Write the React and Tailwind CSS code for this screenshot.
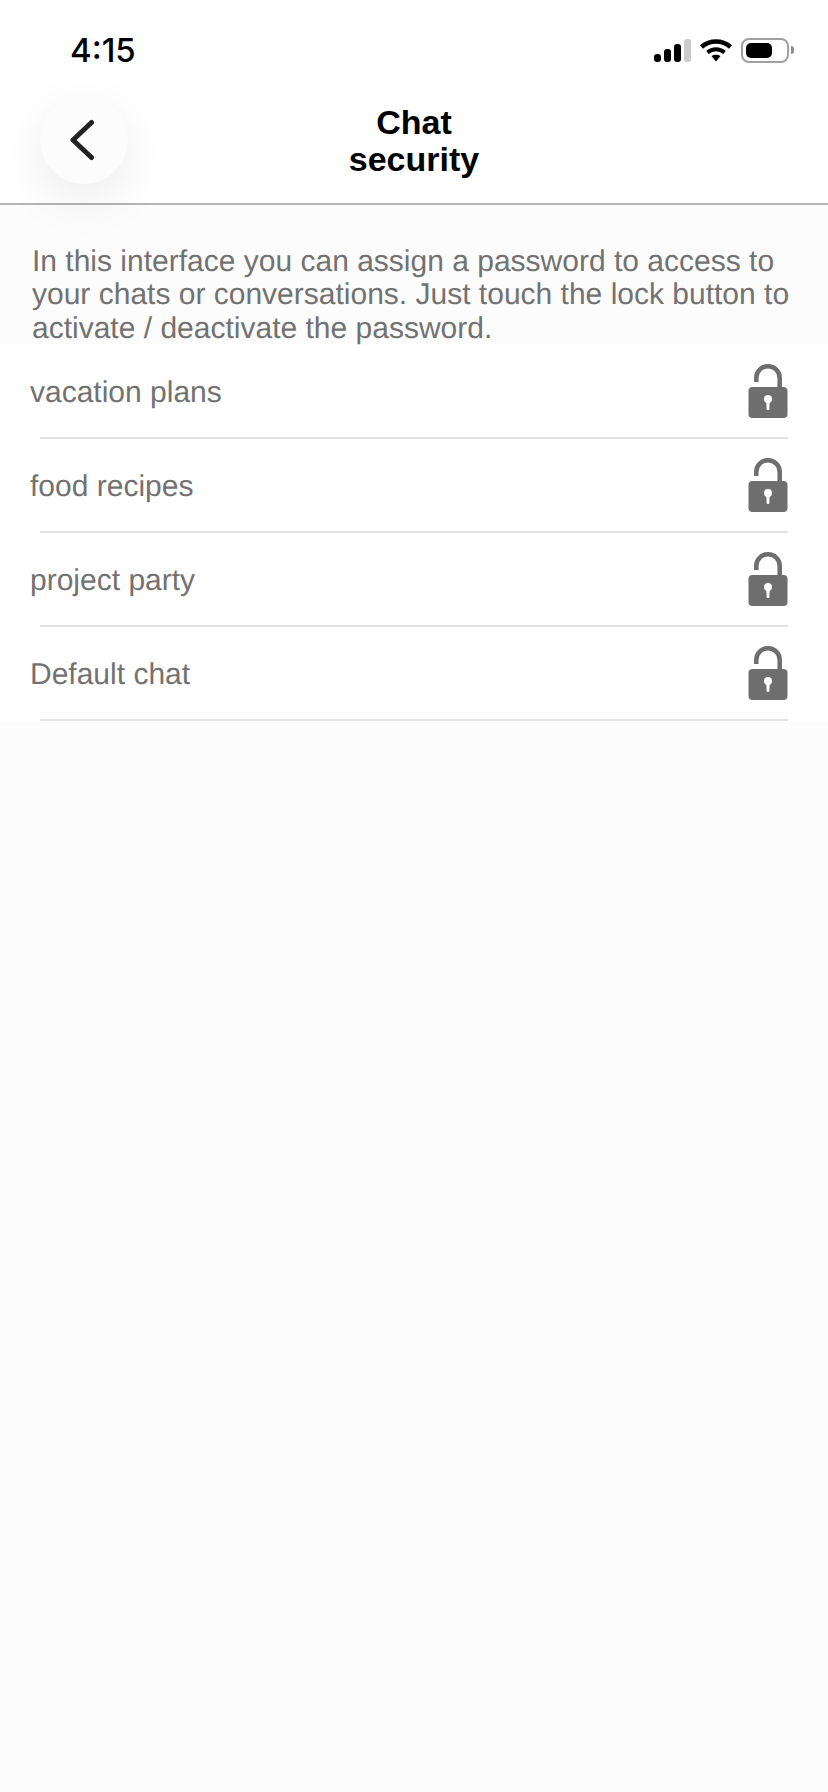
const chats = ["vacation plans", "food recipes", "project party", "Default chat"];

function SignalIcon() {
  return (
    <svg width="37" height="23" viewBox="0 0 37 23">
      <rect x="0" y="15" width="7" height="8" rx="3" fill="#000" />
      <rect x="10" y="10" width="7" height="13" rx="3" fill="#000" />
      <rect x="20" y="5" width="7" height="18" rx="3" fill="#000" />
      <rect x="30" y="0" width="7" height="23" rx="2.5" fill="#ccc" />
    </svg>
  );
}

function WifiIcon() {
  return (
    <svg width="32" height="24" viewBox="0 0 32 24">
      <path d="M1.500 9C10 1.800 22 1.800 30.500 9" fill="none" stroke="#000" strokeWidth="4.500" />
      <path d="M7.500 14.500C12.500 10.300 19.500 10.300 24.500 14.500" fill="none" stroke="#000" strokeWidth="4" />
      <path d="M11.500 18C14 16.200 18 16.200 20.500 18L16 23.500Z" fill="#000" />
    </svg>
  );
}

function BatteryIcon() {
  return (
    <div className="flex items-center">
      <div className="flex h-[25px] w-[48px] items-center rounded-[8px] border-2 border-[#a0a0a0] p-[3px]">
        <div className="h-[15px] w-[26px] rounded-[5px] bg-black" />
      </div>
      <div className="ml-[2px] h-[8px] w-[3px] rounded-r-full bg-[#8e8e8e]" />
    </div>
  );
}

function LockIcon() {
  return (
    <svg width="40" height="54" viewBox="0 0 40 54">
      <path d="M8.300 18V14C8.300 7 13.500 2.300 20 2.300C26.500 2.300 31.700 7 31.700 14V24" fill="none" stroke="#6e6e6e" strokeWidth="4.500" />
      <rect x="0.500" y="23" width="39" height="31" rx="4" fill="#6e6e6e" />
      <circle cx="20" cy="35" r="4" fill="#fff" />
      <path d="M18.300 36H21.700L21.400 45C21.300 46.300 18.700 46.300 18.600 45Z" fill="#fff" />
    </svg>
  );
}

export default function App() {
  return (
    <div className="min-h-[1792px] bg-[#fcfcfc] font-['Liberation_Sans',Arial,sans-serif]">
      <div className="relative h-[205px] border-b-2 border-[#b4b4b4] bg-white">
        <div className="flex items-center justify-between pl-[70px] pr-[34px] pt-[31px]">
          <span className="font-['Inter',sans-serif] text-[33px] font-medium leading-[38px] text-black">4:15</span>
          <div className="flex items-center gap-[9px]">
            <SignalIcon />
            <WifiIcon />
            <BatteryIcon />
          </div>
        </div>
        <div className="mt-[35px] text-center text-[34px] font-bold leading-[37px] text-black">
          Chat
          <br />
          security
        </div>
        <div className="absolute left-[40px] top-[96px] flex h-[88px] w-[88px] items-center justify-center rounded-full bg-[#fcfcfc] shadow-[0_15px_50px_rgba(0,0,0,0.08)]">
          <svg width="26" height="42" viewBox="0 0 26 42" className="mr-[4px]">
            <path d="M22.500 3.500L4 21L22.500 38.500" fill="none" stroke="#222" strokeWidth="5" strokeLinecap="round" strokeLinejoin="round" />
          </svg>
        </div>
      </div>

      <p className="h-[140px] overflow-hidden pl-[32px] pr-[30px] pt-[40px] text-[30px] leading-[33.400px] text-[#727272] [text-rendering:geometricPrecision]">
        In this interface you can assign a password to access to your chats or conversations. Just touch the lock button to activate / deactivate the password.
      </p>

      <div className="bg-white">
        {chats.map((name) => (
          <div key={name} className="relative flex h-[94px] items-center justify-between pb-[2px] pl-[30px] pr-[40px]">
            <span className="pt-[4px] text-[30px] leading-[36px] text-[#727272] [text-rendering:geometricPrecision]">{name}</span>
            <LockIcon />
            <div className="absolute bottom-0 left-[40px] right-[40px] h-[2px] bg-[#e3e3e3]" />
          </div>
        ))}
      </div>
    </div>
  );
}
